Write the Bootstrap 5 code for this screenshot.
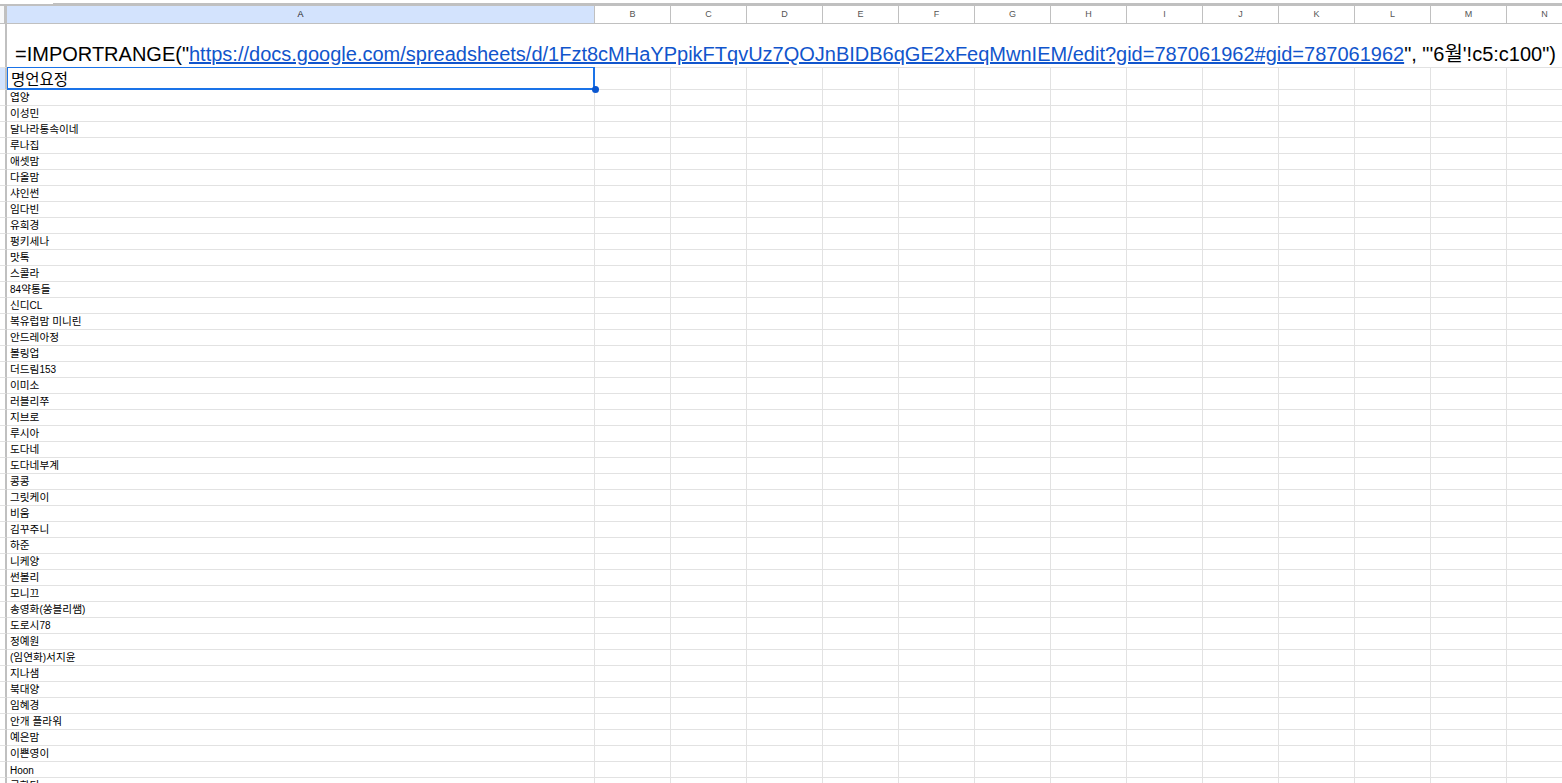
<!DOCTYPE html>
<html lang="ko">
  <head>
    <meta charset="UTF-8" />
    <title>Sheet</title>
    <link rel="stylesheet" href="https://cdn.jsdelivr.net/npm/bootstrap@5.3.3/dist/css/bootstrap.min.css" />
    <script src="https://cdn.jsdelivr.net/npm/bootstrap@5.3.3/dist/js/bootstrap.bundle.min.js"></script>
    <style>
      html, body { height: 783px; overflow: hidden; background: #fff; }
      .top-bar { height: 6px; padding-top: 3px; }
      .top-left { width: 53px; height: 2px; margin-top: 1px; background: #c0c0c0; }
      .top-right { height: 3px; background: #c0c0c0; }
      .sheet-wrap { height: 777px; overflow: hidden; }
      .sheet { border-collapse: separate; border-spacing: 0; table-layout: fixed; width: 1583px; font-family: "Liberation Sans", "Noto Sans CJK KR", sans-serif; font-size: 10.67px; color: #000; }
      .sheet td, .sheet th { padding: 0; border-right: 1px solid #e2e2e2; border-bottom: 1px solid #e2e2e2; overflow: visible; white-space: nowrap; }
      .sheet th.corner { background: linear-gradient(90deg, #f8f9fa 4px, #c0c0c0 4px); border-right: 0; border-bottom: 1px solid #c0c0c0; }
      .sheet th.col-head { font-weight: 400; font-size: 9px; text-align: center; color: #555; height: 18px; border-right: 1px solid #c0c0c0; border-bottom: 1px solid #c0c0c0; }
      .sheet th.col-head.on { background: #d3e3fd; color: #222; }
      .col-row { width: 7px; }
      .col-a { width: 588px; }
      .col-n { width: 76px; }
      .sheet th.row-head { background: #fff; border-right: 2px solid #c0c0c0; }
      .sheet th.row-head.on { background: #d3e3fd; }
      .name-row td, .name-row th { height: 16px; }
      .nm-box { height: 15px; padding: 1px 0 0 3px; line-height: 14px; }
      .nm-box.hangul { padding-top: 0; }
      .latin { font-size: 10px; }
      .formula-row td, .formula-row th { height: 44px; }
      .sheet td.formula { font-size: 20px; line-height: 23px; vertical-align: bottom; padding: 0 0 1px 8px; border-right: 0; }
      .formula a { color: #1155cc; }
      .pick-row td, .pick-row th { height: 22px; }
      .sheet td.picked { position: relative; font-size: 15.5px; line-height: 16px; vertical-align: bottom; padding-left: 3px; border-left: 1px solid #1a73e8; border-right: 2px solid #1a73e8; border-bottom: 2px solid #1a73e8; box-shadow: 0 -1px 0 #1a73e8; }
      .drag-dot { position: absolute; right: -6px; bottom: -5px; width: 7px; height: 7px; border-radius: 50%; background: #0b57d0; }
    </style>
  </head>
  <body>
    <div class="top-bar d-flex">
      <div class="top-left"></div>
      <div class="top-right flex-grow-1"></div>
    </div>
    <div class="sheet-wrap">
      <table class="sheet" id="sheet">
        <colgroup id="cols"></colgroup>
      </table>
    </div>

    <script>
      const names = ["엽양","이성민","달나라통속이네","루나집","애셋맘","다올맘","샤인썬","임다빈","유희경","펑키세나","맛톡","스콜라","84약통들","신디CL","복유럽맘 미니린","안드레아정","볼링업","더드림153","이미소","러블리쭈","지브로","루시아","도다네","도다네부계","콩콩","그릿케이","비움","김꾸주니","하준","니케양","썬볼리","모니끄","송영화(쏭블리쌤)","도로시78","정예원","(임연화)서지윤","지나샘","북대양","임혜경","안개 플라워","예은맘","이쁜영이","Hoon","국화티"];
      const letters = "BCDEFGHIJKLMN".split("");
      const url = "https://docs.google.com/spreadsheets/d/1Fzt8cMHaYPpikFTqvUz7QOJnBIDB6qGE2xFeqMwnIEM/edit?gid=787061962#gid=787061962";
      const blanks = letters.map(() => "<td></td>").join("");

      document.querySelector("#cols").innerHTML =
        `<col class="col-row" /><col class="col-a" />` + letters.map(() => `<col class="col-n" />`).join("");

      // Latin runs sit a little smaller than the Korean text next to them
      const nameHtml = (name) => name.replace(/[A-Za-z0-9()]+/g, '<span class="latin">$&</span>');

      let html = `<tr><th class="corner"></th><th class="col-head on">A</th>` +
        letters.map((l) => `<th class="col-head">${l}</th>`).join("") + `</tr>`;
      html += `<tr class="formula-row"><th class="row-head"></th><td class="formula" colspan="14">=IMPORTRANGE("<a href="#">${url}</a>", "'6월'!c5:c100")</td></tr>`;
      html += `<tr class="pick-row"><th class="row-head on"></th><td class="picked">명언요정<span class="drag-dot"></span></td>${blanks}</tr>`;
      names.forEach((name) => {
        const cls = /[가-힣]/.test(name) ? "nm-box hangul" : "nm-box";
        html += `<tr class="name-row"><th class="row-head"></th><td><div class="${cls}">${nameHtml(name)}</div></td>${blanks}</tr>`;
      });
      document.querySelector("#sheet").insertAdjacentHTML("beforeend", html);
    </script>
  </body>
</html>
